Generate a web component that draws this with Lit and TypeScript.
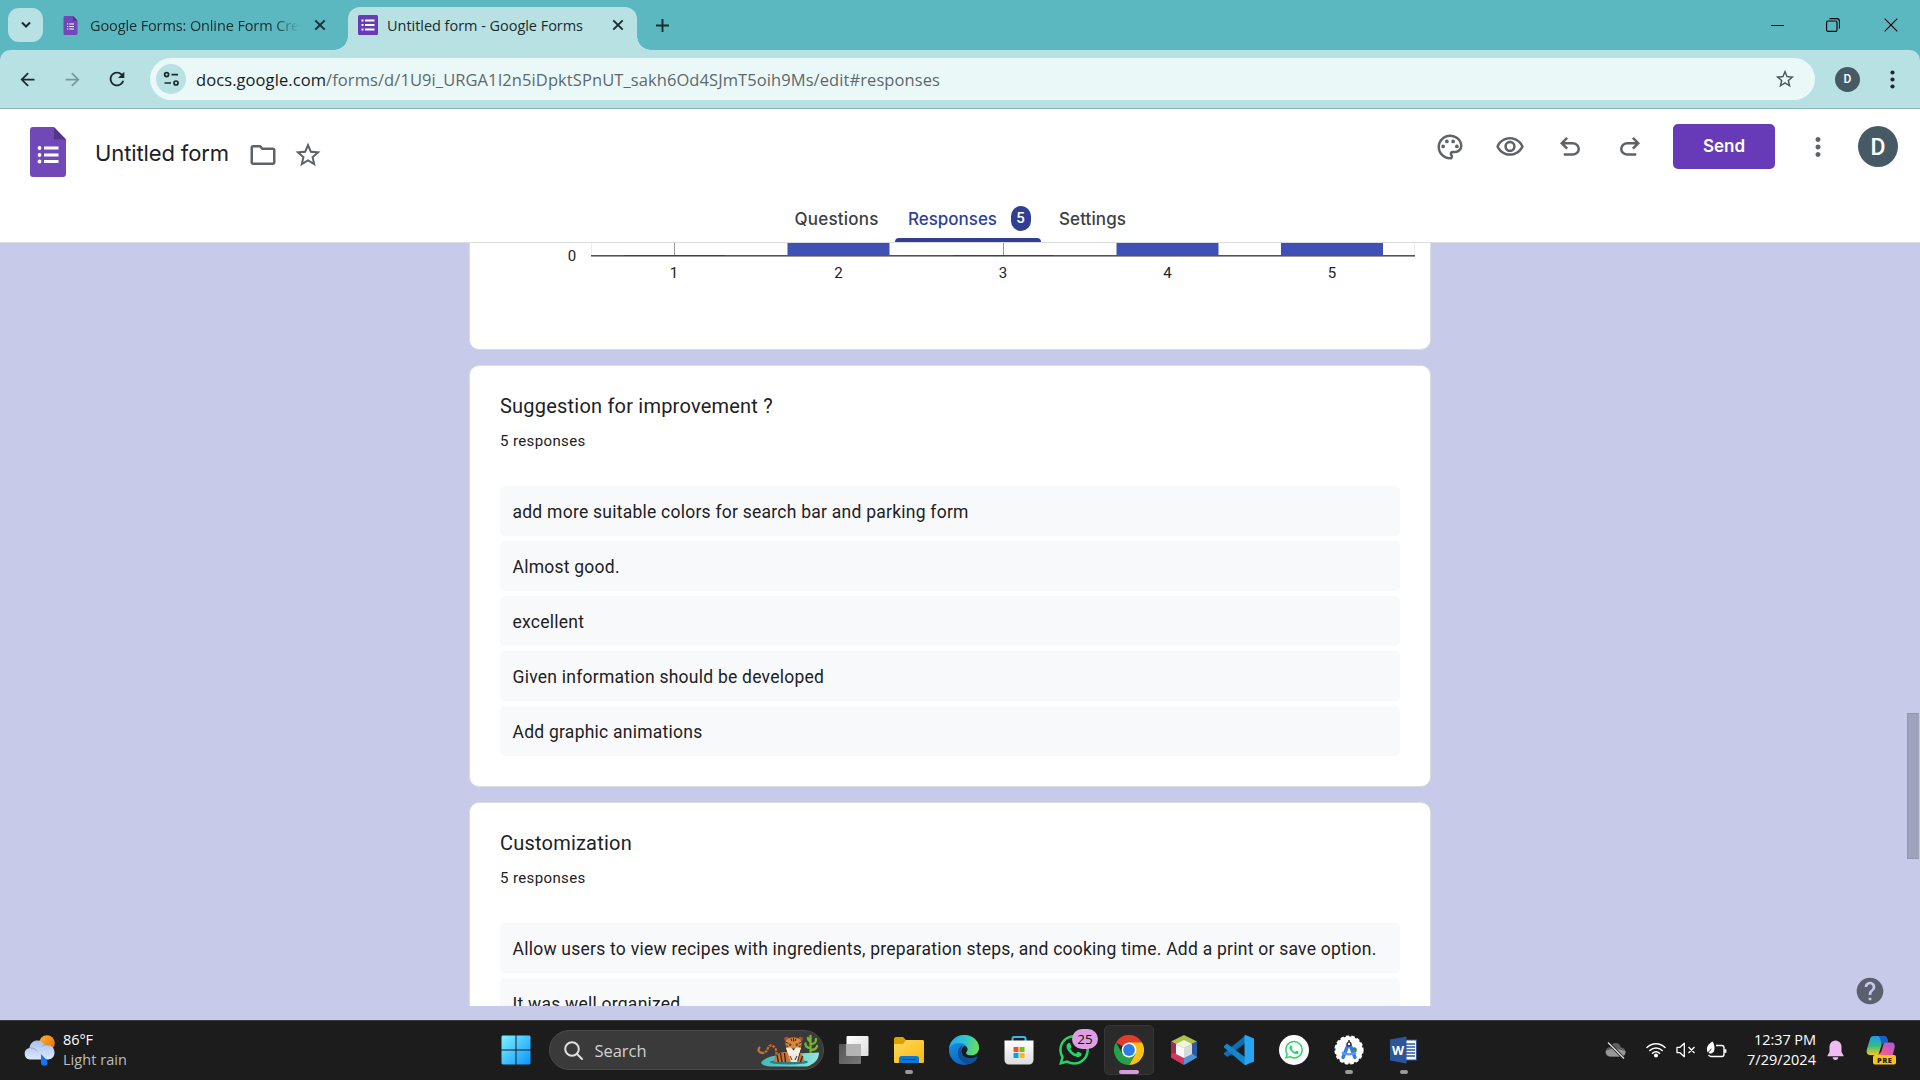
import { LitElement, html, svg, css } from "lit";
import { customElement, property } from "lit/decorators.js";

const ICON = {
  palette: "M12 22C6.49 22 2 17.51 2 12S6.49 2 12 2s10 4.04 10 9c0 3.31-2.69 6-6 6h-1.77c-.28 0-.5.22-.5.5 0 .12.05.23.13.33.41.47.64 1.06.64 1.67A2.5 2.5 0 0 1 12 22zm0-18c-4.41 0-8 3.59-8 8s3.59 8 8 8c.28 0 .5-.22.5-.5a.54.54 0 0 0-.14-.35c-.41-.46-.63-1.05-.63-1.65a2.5 2.5 0 0 1 2.5-2.5H16c2.21 0 4-1.79 4-4 0-3.86-3.59-7-8-7zM5 11.5a1.5 1.5 0 1 0 3 0a1.5 1.5 0 1 0-3 0zM8 7.5a1.5 1.5 0 1 0 3 0a1.5 1.5 0 1 0-3 0zM13 7.5a1.5 1.5 0 1 0 3 0a1.5 1.5 0 1 0-3 0zM16 11.5a1.5 1.5 0 1 0 3 0a1.5 1.5 0 1 0-3 0z",
  eye: "M12 6c3.79 0 7.17 2.13 8.82 5.5C19.17 14.87 15.79 17 12 17s-7.17-2.13-8.82-5.5C4.83 8.13 8.21 6 12 6m0-2C7 4 2.73 7.11 1 11.5 2.73 15.89 7 19 12 19s9.27-3.11 11-7.5C21.27 7.11 17 4 12 4zm0 5a2.5 2.5 0 0 1 0 5 2.5 2.5 0 0 1 0-5m0-2c-2.48 0-4.5 2.02-4.5 4.5S9.52 16 12 16s4.5-2.02 4.5-4.5S14.48 7 12 7z",
  undo: "M7 19v-2h7.1q1.575 0 2.738-1T18 13.5 16.838 11 14.1 10H7.8l2.6 2.6L9 14 4 9l5-5 1.4 1.4L7.8 8h6.3q2.425 0 4.163 1.575T20 13.5t-1.737 3.925T14.1 19z",
  redo: "M17 19v-2H9.9q-1.575 0-2.738-1T6 13.5 7.162 11 9.9 10h6.3l-2.6 2.6L15 14l5-5-5-5-1.4 1.4L16.2 8H9.9Q7.475 8 5.737 9.575T4 13.5t1.737 3.925T9.9 19z",
  folder: "M9.17 6l2 2H20v10H4V6h5.17M10 4H4c-1.1 0-1.99.9-1.99 2L2 18c0 1.1.9 2 2 2h16c1.1 0 2-.9 2-2V8c0-1.1-.9-2-2-2h-8l-2-2z",
  star: "M22 9.24l-7.19-.62L12 2 9.19 8.63 2 9.24l5.46 4.73L5.82 21 12 17.27 18.18 21l-1.63-7.03L22 9.24zM12 15.4l-3.76 2.27 1-4.28-3.32-2.88 4.38-.38L12 6.1l1.71 4.04 4.38.38-3.32 2.88 1 4.28L12 15.4z",
  more: "M12 8c1.1 0 2-.9 2-2s-.9-2-2-2-2 .9-2 2 .9 2 2 2zm0 2c-1.1 0-2 .9-2 2s.9 2 2 2 2-.9 2-2-.9-2-2-2zm0 6c-1.1 0-2 .9-2 2s.9 2 2 2 2-.9 2-2-.9-2-2-2z",
  help: "M12 2C6.48 2 2 6.48 2 12s4.48 10 10 10 10-4.48 10-10S17.52 2 12 2zm1 17h-2v-2h2v2zm2.07-7.75l-.9.92C13.45 12.9 13 13.5 13 15h-2v-.5c0-1.1.45-2.1 1.17-2.83l1.24-1.26c.37-.36.59-.86.59-1.41 0-1.1-.9-2-2-2s-2 .9-2 2H8c0-2.21 1.79-4 4-4s4 1.79 4 4c0 .88-.36 1.68-.93 2.25z",
  reload: "M17.65 6.35A7.958 7.958 0 0 0 12 4c-4.42 0-7.99 3.58-7.99 8s3.57 8 7.99 8c3.73 0 6.84-2.55 7.73-6h-2.08A5.99 5.99 0 0 1 12 18c-3.31 0-6-2.69-6-6s2.69-6 6-6c1.66 0 3.14.69 4.22 1.78L13 11h7V4l-2.35 2.35z",
  back: "M20 11H7.83l5.59-5.59L12 4l-8 8 8 8 1.41-1.41L7.83 13H20v-2z",
  forward: "M4 11h12.17l-5.59-5.59L12 4l8 8-8 8-1.41-1.41L16.17 13H4v-2z",
  whatsapp: "M17.472 14.382c-.297-.149-1.758-.867-2.03-.967-.273-.099-.471-.148-.67.15-.197.297-.767.966-.94 1.164-.173.199-.347.223-.644.075-.297-.15-1.255-.463-2.39-1.475-.883-.788-1.48-1.761-1.653-2.059-.173-.297-.018-.458.13-.606.134-.133.298-.347.446-.52.149-.174.198-.298.298-.497.099-.198.05-.371-.025-.52-.075-.149-.669-1.612-.916-2.207-.242-.579-.487-.5-.669-.51-.173-.008-.371-.01-.57-.01-.198 0-.52.074-.792.372-.272.297-1.04 1.016-1.04 2.479 0 1.462 1.065 2.875 1.213 3.074.149.198 2.096 3.2 5.077 4.487.709.306 1.262.489 1.694.625.712.227 1.36.195 1.871.118.571-.085 1.758-.719 2.006-1.413.248-.694.248-1.289.173-1.413-.074-.124-.272-.198-.57-.347m-5.421 7.403h-.004a9.87 9.87 0 01-5.031-1.378l-.361-.214-3.741.982.998-3.648-.235-.374a9.86 9.86 0 01-1.51-5.26c.001-5.45 4.436-9.884 9.888-9.884 2.64 0 5.122 1.03 6.988 2.898a9.825 9.825 0 012.893 6.994c-.003 5.45-4.437 9.884-9.885 9.884m8.413-18.297A11.815 11.815 0 0012.05 0C5.495 0 .16 5.335.157 11.892c0 2.096.547 4.142 1.588 5.945L.057 24l6.305-1.654a11.882 11.882 0 005.683 1.448h.005c6.554 0 11.89-5.335 11.893-11.893a11.821 11.821 0 00-3.48-8.413Z",
};

const icon = (path: string, size: number) =>
  html`<svg width=${size} height=${size} viewBox="0 0 24 24" fill="currentColor"><path d=${path}></path></svg>`;

const closeIcon = html`<svg width="12" height="12" viewBox="0 0 12 12" fill="none" stroke="#1c2b2d" stroke-width="1.9"><path d="M1.3 1.3l9.4 9.4M10.7 1.3l-9.4 9.4"></path></svg>`;

/* Single-line label whose tracking is adjusted so the text takes exactly `width` pixels. */
@customElement("fit-label")
class FitLabel extends LitElement {
  @property({ type: Number }) width = 0;
  static styles = css`
    :host { display: inline-block; white-space: nowrap; flex: none; }
    .text { display: inline-block; }
  `;
  firstUpdated() {
    const el = this.renderRoot.querySelector(".text") as HTMLElement;
    const count = (this.textContent ?? "").trim().length;
    const natural = el.getBoundingClientRect().width;
    if (count > 0 && natural > 0) el.style.letterSpacing = `${(this.width - natural) / count}px`;
  }
  render() {
    return html`<span class="text"><slot></slot></span>`;
  }
}

@customElement("browser-chrome")
class BrowserChrome extends LitElement {
  static styles = css`
    :host { display: block; font-family: "Open Sans", "Noto Sans", sans-serif; color: #1b2a2c; background: #5bb8c1; }
    .strip { height: 50px; display: flex; align-items: center; padding-left: 8px; box-sizing: border-box; }
    .search { width: 35px; height: 34px; border-radius: 11px; background: #b8e1e4; display: flex; align-items: center; justify-content: center; }
    .tab { display: flex; align-items: center; font-size: 14.5px; letter-spacing: 0; }
    .idle { width: 305px; padding-left: 20px; box-sizing: border-box; }
    .idle .title { margin-left: 12px; width: 209px; -webkit-mask-image: linear-gradient(90deg, #000 88%, transparent 100%); mask-image: linear-gradient(90deg, #000 88%, transparent 100%); }
    .idle .x { margin-left: 15px; }
    svg { display: block; flex: none; }
    .active { align-self: flex-end; position: relative; height: 43px; width: 289px; background: #b8e1e4; border-radius: 12px 12px 0 0; padding: 0 0 7px 10px; box-sizing: border-box; }
    .active::before, .active::after { content: ""; position: absolute; bottom: 0; width: 14px; height: 14px; }
    .active::before { left: -14px; background: radial-gradient(circle at 0 0, transparent 13.5px, #b8e1e4 14px); }
    .active::after { right: -14px; background: radial-gradient(circle at 100% 0, transparent 13.5px, #b8e1e4 14px); }
    .active .title { margin-left: 9px; }
    .active .x { margin-left: 29px; }
    .plus { margin-left: 19px; }
    .window { margin-left: auto; display: flex; align-items: center; padding-right: 22px; }
    .window .mid { margin: 0 44px 0 42px; }
    .bar { height: 58px; background: #b8e1e4; border-radius: 10px 10px 0 0; display: flex; align-items: center; padding-left: 17px; border-bottom: 1px solid #8fb5b9; }
    .fwd { margin-left: 24px; color: #7a999c; }
    .rel { margin-left: 23px; }
    .omni { margin-left: 22px; width: 1665px; height: 42px; border-radius: 21px; background: #ebf8f8; display: flex; align-items: center; padding-left: 6px; box-sizing: border-box; }
    .tune { width: 30px; height: 30px; border-radius: 50%; background: #b8e1e4; display: flex; align-items: center; justify-content: center; }
    .url { margin-left: 10px; font-size: 16.5px; line-height: 24px; color: #5d696b; padding-top: 1px; }
    .host { color: #182022; }
    .fav { margin-left: auto; margin-right: 19px; color: #4b5759; }
    .me { margin-left: 20px; width: 25px; height: 25px; border-radius: 50%; background: #455a64; color: #fff; font: 500 12px/25px Roboto, sans-serif; text-align: center; }
    .dots { margin-left: 22px; }
  `;
  render() {
    return html`
      <div class="strip">
        <div class="search"><svg width="10" height="8" viewBox="0 0 10 8" fill="none" stroke="#1b2a2c" stroke-width="2"><path d="M1 1.5l4 4 4-4"></path></svg></div>
        <div class="tab idle">
          <svg width="15" height="19" viewBox="0 0 15 19"><path d="M1.5 0H10l4.500 4.500V17.500a1.400 1.400 0 0 1-1.400 1.400H1.500A1.400 1.400 0 0 1 .5 17.500V1.400A1.400 1.400 0 0 1 1.500 0z" fill="#7248b9"></path><path d="M10 0l4.500 4.500H10z" fill="#54308f"></path><path d="M4 8h1.200M6.300 8H11M4 10.500h1.200M6.300 10.500H11M4 13h1.200M6.300 13H11" stroke="#fff" stroke-width="1.200"></path></svg>
          <div class="title"><fit-label width="209">Google Forms: Online Form Cre</fit-label></div>
          <span class="x">${closeIcon}</span>
        </div>
        <div class="tab active">
          <svg width="20" height="20" viewBox="0 0 20 20"><rect width="20" height="20" rx="1.500" fill="#673ab7"></rect><path d="M3.500 5.500h2M7 5.500h9.500M3.500 10h2M7 10h9.500M3.500 14.500h2M7 14.500h9.500" stroke="#fff" stroke-width="2"></path></svg>
          <fit-label class="title" width="196">Untitled form - Google Forms</fit-label>
          <span class="x">${closeIcon}</span>
        </div>
        <svg class="plus" width="13" height="13" viewBox="0 0 13 13" stroke="#1b2a2c" stroke-width="1.900"><path d="M6.500 0v13M0 6.500h13"></path></svg>
        <div class="window">
          <svg width="13" height="13" viewBox="0 0 13 13" stroke="#000" stroke-width="1"><path d="M0 6.500h13"></path></svg>
          <svg class="mid" width="14" height="14" viewBox="0 0 14 14" fill="none" stroke="#000" stroke-width="1.100"><rect x=".6" y="3" width="10.400" height="10.400" rx="1.500"></rect><path d="M3.500 .6h7.200a2.700 2.700 0 0 1 2.700 2.700v7.200"></path></svg>
          <svg width="14" height="14" viewBox="0 0 14 14" stroke="#000" stroke-width="1.100"><path d="M.7 .7l12.600 12.600M13.300 .7L.7 13.300"></path></svg>
        </div>
      </div>
      <div class="bar">
        ${icon(ICON.back, 21)}
        <span class="fwd">${icon(ICON.forward, 21)}</span>
        <span class="rel">${icon(ICON.reload, 22)}</span>
        <div class="omni">
          <div class="tune"><svg width="17" height="16" viewBox="0 0 17 16" fill="none" stroke="#1b2a2c" stroke-width="1.700"><circle cx="3.600" cy="3.600" r="2"></circle><path d="M8.500 3.600H15M1.500 12h6.500"></path><circle cx="13" cy="12" r="2"></circle></svg></div>
          <fit-label class="url" width="744"><span class="host">docs.google.com</span>/forms/d/1U9i_URGA1I2n5iDpktSPnUT_sakh6Od4SJmT5oih9Ms/edit#responses</fit-label>
          <span class="fav">${icon(ICON.star, 22)}</span>
        </div>
        <div class="me">D</div>
        <svg class="dots" width="21" height="21" viewBox="0 0 21 21" fill="#1b2a2c"><circle cx="10.500" cy="3.500" r="2.100"></circle><circle cx="10.500" cy="10.500" r="2.100"></circle><circle cx="10.500" cy="17.500" r="2.100"></circle></svg>
      </div>`;
  }
}

@customElement("form-header")
class FormHeader extends LitElement {
  static styles = css`
    :host { display: block; background: #fff; border-bottom: 1px solid #dadce0; font-family: Inter, "Open Sans", sans-serif; color: #202124; }
    svg { display: block; flex: none; }
    .top { height: 86px; display: flex; align-items: flex-start; justify-content: space-between; box-sizing: border-box; padding: 15px 22px 0 29px; }
    .left { display: flex; align-items: center; height: 50px; margin-top: 3px; color: #5f6368; }
    .name { margin: 0 19px 0 28px; font-size: 22px; color: #202124; line-height: 30px; padding-top: 2px; }
    .left .star { margin-left: 15px; padding-top: 5px; }
    .left .folder { padding-top: 5px; }
    .right { display: flex; align-items: center; height: 45px; color: #5f6368; }
    .right > svg { margin-right: 30px; }
    .send { width: 102px; height: 45px; border-radius: 5px; background: #673ab7; color: #fff; font-weight: 600; font-size: 17px; display: flex; align-items: center; justify-content: center; margin: 0 28px 0 -2px; }
    .send fit-label { margin-top: -1px; }
    .avatar { width: 40px; height: 41px; border-radius: 50%; background: #455a64; color: #fff; font: 500 23px/43px Roboto, sans-serif; text-align: center; }
    .right > svg.more { margin-right: 25px; }
    .tabs { height: 47px; display: flex; justify-content: center; font-size: 17px; font-weight: 450; color: #3c4043; }
    .tab { display: flex; align-items: center; box-sizing: border-box; }
    .q { width: 115px; padding-left: 14.5px; }
    .r { width: 146px; padding-left: 13px; color: #303f9f; padding-top: 0; position: relative; }
    .r::after { content: ""; position: absolute; left: 0; right: 0; bottom: 0; height: 4px; border-radius: 4px 4px 0 0; background: #303f91; }
    .s { width: 99px; padding-left: 18px; }
    .count { margin-left: 13.5px; width: 20px; height: 25px; border-radius: 10px; background: #303f91; color: #fff; font: 500 15px/25px Roboto, sans-serif; text-align: center; }
  `;
  render() {
    return html`
      <div class="top">
        <div class="left">
          <svg width="38" height="50" viewBox="0 0 38 50"><path d="M4 0h20.500L37 12.500V47a3 3 0 0 1-3 3H4a3 3 0 0 1-3-3V3a3 3 0 0 1 3-3z" fill="#7248b9"></path><path d="M25 0l12 12.500H25z" fill="#54358a"></path><g fill="#fff"><circle cx="10.500" cy="21" r="1.900"></circle><circle cx="10.500" cy="28" r="1.900"></circle><circle cx="10.500" cy="34.500" r="1.900"></circle><path d="M15 19.500h14.500v3H15zM15 26.400h14.500v3H15zM15 33h14.500v3H15z"></path></g></svg>
          <fit-label class="name" width="134">Untitled form</fit-label>
          <span class="folder">${icon(ICON.folder, 30)}</span>
          <span class="star">${icon(ICON.star, 30)}</span>
        </div>
        <div class="right">
          ${icon(ICON.palette, 30)}${icon(ICON.eye, 30)}${icon(ICON.undo, 30)}${icon(ICON.redo, 30)}
          <div class="send"><fit-label width="42">Send</fit-label></div>
          <svg class="more" width="30" height="30" viewBox="0 0 24 24" fill="currentColor"><path d=${ICON.more}></path></svg>
          <div class="avatar">D</div>
        </div>
      </div>
      <div class="tabs">
        <div class="tab q"><fit-label width="84">Questions</fit-label></div>
        <div class="tab r"><fit-label width="89">Responses</fit-label><span class="count">5</span></div>
        <div class="tab s"><fit-label width="67">Settings</fit-label></div>
      </div>`;
  }
}

interface Question { title: string; answers: string[]; }

const QUESTIONS: Question[] = [
  { title: "Suggestion for improvement ?", answers: ["add more suitable colors for search bar and parking form", "Almost good.", "excellent", "Given information should be developed", "Add graphic animations"] },
  { title: "Customization", answers: ["Allow users to view recipes with ingredients, preparation steps, and cooking time. Add a print or save option.", "It was well organized"] },
];

@customElement("form-responses")
class FormResponses extends LitElement {
  static styles = css`
    :host { display: grid; grid-template-columns: 1900px 20px; height: 777px; background: #c7cae9; font-family: Roboto, sans-serif; color: #202124; }
    .feed { height: 763px; overflow: hidden; display: flex; flex-direction: column; align-items: center; gap: 15px; }
    .card { flex: none; width: 962px; box-sizing: border-box; background: #fff; border: 1px solid #dadce0; border-radius: 10px; padding: 25px 30px 30px; }
    .chart { height: 107px; border-top: 0; border-radius: 0 0 10px 10px; padding: 0; }
    .chart svg { display: block; }
    .axis { font: 15px Roboto, sans-serif; fill: #222; }
    .title { font-size: 20px; line-height: 30px; letter-spacing: 0.21px; }
    .total { font-size: 15px; line-height: 25px; letter-spacing: 0.375px; margin: 8px 0 32px; }
    .list { display: flex; flex-direction: column; gap: 5px; }
    .answer { height: 50px; line-height: 52px; border-radius: 5px; background: #f8f9fa; padding-left: 12.5px; font-size: 17.5px; letter-spacing: 0.243px; white-space: nowrap; }
    .rail { display: flex; flex-direction: column; padding: 470px 1px 0 7px; }
    .thumb { height: 146px; background: #9ea2bc; border: 1px solid #9195b1; border-right: 0; box-sizing: border-box; }
    .help { position: absolute; left: 1854px; top: 975px; color: #5c5f70; }
  `;
  render() {
    const cols = [674, 838.5, 1003, 1167.5, 1332];
    const bars = [1, 3, 4];
    return html`
      <div class="feed">
        <div class="card chart">
          <svg width="960" height="60" viewBox="470 243 960 60">
            <path d="M591.5 243v12M1414.500 243v12" stroke="#ebebeb"></path>
            <path d="M674.500 243v12M1003.500 243v12" stroke="#999"></path>
            ${bars.map((i) => svg`<rect x=${cols[i] - 51} y="243" width="102" height="12" fill="#3f51b5"></rect>`)}
            <path d="M591 255.500h824" stroke="#555" stroke-width="1"></path>
            <path d="M591 256.500h824" stroke="#999" stroke-width="1"></path>
            <path d="M624 255.500h101M953 255.500h101" stroke="#3c3f5c" stroke-width="1"></path>
            <text class="axis" x="572" y="261" text-anchor="middle">0</text>
            ${cols.map((x, i) => svg`<text class="axis" x=${x} y="278" text-anchor="middle">${i + 1}</text>`)}
          </svg>
        </div>
        ${QUESTIONS.map((q) => html`
          <div class="card">
            <div class="title">${q.title}</div>
            <div class="total">5 responses</div>
            <div class="list">${q.answers.map((a) => html`<div class="answer">${a}</div>`)}</div>
          </div>`)}
      </div>
      <div class="rail"><div class="thumb"></div></div>
      <div class="help">${icon(ICON.help, 32)}</div>`;
  }
}

const tiger = html`<svg width="64" height="40" viewBox="0 0 64 40">
  <defs><linearGradient id="pool" x1="0" x2="1"><stop offset="0" stop-color="#3fb8ba"></stop><stop offset="1" stop-color="#8fe6dc"></stop></linearGradient></defs>
  <path d="M4 33c2-5 12-8 26-9l32-1.500c0 8-6 12-12 14H17C9 36.500 5 35 4 33z" fill="url(#pool)"></path>
  <ellipse cx="32" cy="32" rx="19" ry="2.600" fill="#247f8b"></ellipse>
  <path d="M20 29c-2-4 1-8-2-11-3-4-6-3-7 0-1 3-2 5-5 5-4 0-6-3-3-6" fill="none" stroke="#c96f33" stroke-width="2.300"></path>
  <path d="M20 29c-2-4 1-8-2-11-3-4-6-3-7 0-1 3-2 5-5 5" fill="none" stroke="#3a2418" stroke-width="2.300" stroke-dasharray=".9 2.800"></path>
  <path d="M17 32c0-6 4-10 11-10h13c5 1 6 6 6 10z" fill="#d0742f"></path>
  <path d="M20 25l1.500 7M23.500 23l1.500 9M27.500 23l1 9M42.500 23l-2 8M45.500 26l-2 6" stroke="#33202a" stroke-width="1.300"></path>
  <path d="M30 21h13l-3 11h-6z" fill="#f0e2d4"></path>
  <path d="M33 26l2 4M40 26l-2 4" stroke="#43302e" stroke-width="1"></path>
  <circle cx="29.500" cy="9" r="2.300" fill="#a8542a"></circle><circle cx="43.500" cy="9" r="2.300" fill="#a8542a"></circle>
  <path d="M28.500 13c0-4 4-5.500 8-5.500s8 1.500 8 5.500c0 5-2 10-8 11-6-1-8-6-8-11z" fill="#dc8440"></path>
  <path d="M29 18c2 0 4-1 5 0l2.500 1 2.500-1c1-1 3 0 5 0-1 4-3 7-7.500 7S30 22 29 18z" fill="#f7efe6"></path>
  <path d="M36.500 8v3.500M34 8.500l.8 2.500M39 8.500l-.8 2.500M29 12.500l2.300 .8M44 12.500l-2.300 .8M29.300 16l2 .3M43.700 16l-2 .3" stroke="#3a2418" stroke-width="1"></path>
  <path d="M34.800 18.500h3.400l-1.700 2z" fill="#3a2418"></path>
  <circle cx="33.200" cy="14.800" r="1.200" fill="#2c5a48"></circle><circle cx="39.800" cy="14.800" r="1.200" fill="#2c5a48"></circle>
  <path d="M53.500 22V6M53.500 18c-3.500 0-5-1.500-5-4.500M53.500 14c4 0 5.500-1 5.500-5M53.500 11c-2 0-2.500-1.500-2.500-3M53.500 20c4 0 6-1 6.500-4" fill="none" stroke="#74b82d" stroke-width="2.300" stroke-linecap="round"></path>
</svg>`;

interface App { art: unknown; mark?: "dot" | "on"; badge?: string; }

const APPS: App[] = [
  { art: html`<svg width="30" height="30" viewBox="0 0 30 30"><defs><linearGradient id="tv1" x2="1" y2="1"><stop offset="0" stop-color="#555"></stop><stop offset="1" stop-color="#777"></stop></linearGradient><linearGradient id="tv2" x2="1" y2="1"><stop offset="0" stop-color="#fff"></stop><stop offset="1" stop-color="#ddd"></stop></linearGradient></defs><rect x="0" y="9" width="22" height="20" rx="1" fill="url(#tv1)"></rect><rect x="7.500" y="1" width="22" height="20" rx="1" fill="url(#tv2)"></rect><path d="M7.500 9H22v12H7.500z" fill="#b4b4b4"></path></svg>` },
  { mark: "dot", art: html`<svg width="30" height="30" viewBox="0 0 30 30"><defs><linearGradient id="fd" x2="1" y2="1"><stop offset="0" stop-color="#ffd95a"></stop><stop offset="1" stop-color="#f9b80f"></stop></linearGradient></defs><path d="M0 4a2 2 0 0 1 2-2h7l3 3h16a2 2 0 0 1 2 2v10H0z" fill="#dfa000"></path><path d="M0 9h9l3-4h16.500A1.500 1.500 0 0 1 30 6.500V26.500A1.500 1.500 0 0 1 28.500 28h-27A1.500 1.500 0 0 1 0 26.500z" fill="url(#fd)"></path><path d="M5 28v-4.500A2.500 2.500 0 0 1 7.500 21h15a2.500 2.500 0 0 1 2.500 2.500V28z" fill="#0f78d4"></path><path d="M9 24.500h12" stroke="#074d99" stroke-width="1.200" stroke-linecap="round"></path></svg>` },
  { art: html`<svg width="30" height="30" viewBox="0 0 30 30"><defs><linearGradient id="e1" x1="0" y1=".3" x2="1" y2=".5"><stop offset="0" stop-color="#25a7ee"></stop><stop offset=".5" stop-color="#2fc4d0"></stop><stop offset="1" stop-color="#6ee04f"></stop></linearGradient><linearGradient id="e2" x1="0" y1="0" x2=".6" y2="1"><stop offset="0" stop-color="#1a9bea"></stop><stop offset="1" stop-color="#0a5fbe"></stop></linearGradient></defs><circle cx="15" cy="15" r="15" fill="url(#e2)"></circle><path d="M0 14C1 5 8 0 15 0c9 0 15 6 15 12.500 0 5-4 8-8 8-3 0-5-1-5-2.500 0-1 1.500-1.500 1.500-4C18.500 11 15 8 10.500 8 5 8 1 11 0 14z" fill="url(#e1)"></path><path d="M14 10c-3 1-5 4-5 8 0 6 5 11 11 11 4-1 7-4 8-6-8 3-16-1-16-8 0-2 1-4 2-5z" fill="#124f94"></path><path d="M15 11c-3 2-4 8 1 11 4 2.500 9 1.500 12-.5l1 1.500h1V15c-1 4-4 5.500-8 5.500-3 0-5-1-5-2.500 0-1 1.500-1.500 1.500-4 0-1.500-1.500-3-3.500-3z" fill="#1c1c1c"></path><path d="M28 21.500C26 23 20 24 16.500 22L20 29c4-.5 7.500-4 8.500-6.500z" fill="#124f94"></path></svg>` },
  { art: html`<svg width="30" height="30" viewBox="0 0 30 30"><defs><linearGradient id="st" x2="0" y2="1"><stop offset="0" stop-color="#fff"></stop><stop offset="1" stop-color="#dcdcdc"></stop></linearGradient></defs><path d="M8.500 6V3.500A1.500 1.500 0 0 1 10 2h10a1.500 1.500 0 0 1 1.500 1.500V6" fill="none" stroke="#35b6ee" stroke-width="2"></path><path d="M.5 5.500h29V25a4.500 4.500 0 0 1-4.500 4.500H5A4.500 4.500 0 0 1 .5 25z" fill="url(#st)"></path><path d="M9.500 12h5v5h-5z" fill="#f25022"></path><path d="M15.500 12h5v5h-5z" fill="#7fba00"></path><path d="M9.500 18h5v5h-5z" fill="#00a4ef"></path><path d="M15.500 18h5v5h-5z" fill="#ffb900"></path></svg>` },
  { badge: "25", art: html`<svg width="30" height="30" viewBox="0 0 24 24" fill="#25d366"><path d=${ICON.whatsapp}></path></svg>` },
  { mark: "on", art: html`<svg width="30" height="30" viewBox="0 0 30 30"><path d="M15 15L2 7.500A15 15 0 0 1 28 7.500z" fill="#e33b2e"></path><path d="M15 7.500H28A15 15 0 0 1 15 30l6.500-11.200z" fill="#fbc116"></path><path d="M2 7.500A15 15 0 0 0 15 30l6.500-11.300L15 15 8.500 18.700z" fill="#24a149"></path><circle cx="15" cy="15" r="7.400" fill="#fff"></circle><circle cx="15" cy="15" r="5.900" fill="#2b7de9"></circle></svg>` },
  { art: html`<svg width="30" height="30" viewBox="0 0 30 30"><path d="M15 0l13 6.500-13 7-13-7z" fill="#adc04a"></path><path d="M2 6.500l13 7V30L2 22.500z" fill="#a9284f"></path><path d="M28 6.500l-13 7V30l13-7.500z" fill="#4d93dc"></path><path d="M2 19l13-4v15L2 22.500z" fill="#d3375e"></path><path d="M28 6.500L22 9v9l6 4z" fill="#2e5a9c"></path><path d="M15 5l8 4-8 4-8-4z" fill="#f0f3df"></path><path d="M7 9l8 4v10l-8-4z" fill="#fafafa"></path><path d="M23 9l-8 4v10l8-4z" fill="#d5d8dc"></path></svg>` },
  { art: html`<svg width="30" height="30" viewBox="0 0 30 30"><path d="M22 0l-1 8L3.500 22 0 19.500v-1.500z" fill="#0b6fb5"></path><path d="M0 11l3-2.500L22 23v7l-2-.5L0 12.500z" fill="#1585cf"></path><path d="M21.500 0L30 3.500v23L21.500 30c-.8 0-1-.5-1-1V1c0-.6.300-1 1-1z" fill="#27a5f2"></path></svg>` },
  { art: html`<svg width="30" height="30" viewBox="0 0 30 30"><circle cx="15" cy="15" r="15" fill="#fff"></circle><g transform="translate(6 5.800) scale(.75)"><path d=${ICON.whatsapp} fill="#25d366"></path></g></svg>` },
  { mark: "dot", art: html`<svg width="30" height="30" viewBox="0 0 30 30"><circle cx="15" cy="15" r="13.600" fill="#fff"></circle><circle cx="15" cy="15" r="13.600" fill="none" stroke="#fff" stroke-width="2" stroke-dasharray="3.500 2"></circle><circle cx="20" cy="15" r="2.800" fill="#2f8f4e"></circle><path d="M14 10L9 22.500M16 10l5 12.500" stroke="#3b78e7" stroke-width="3.400" stroke-linecap="round"></path><path d="M8 17.500c4.500 2.500 9.500 2.500 14 0" stroke="#5a9bf5" stroke-width="2.200" fill="none"></path><circle cx="15" cy="9" r="1.900" fill="#fff" stroke="#333" stroke-width="1.400"></circle><path d="M15 5v2.500" stroke="#333" stroke-width="1.500"></path></svg>` },
  { mark: "dot", art: html`<svg width="28" height="30" viewBox="0 0 28 30"><path d="M14 5h12.500v20H14z" fill="#fff" stroke="#2b579a" stroke-width="1.200"></path><path d="M16 9h9M16 12h9M16 15h9M16 18h9M16 21h9" stroke="#2b579a" stroke-width="1.300"></path><path d="M0 4.500L16.500 1.500v27L0 25.500z" fill="#2b579a"></path><text class="w" x="8" y="19.500" text-anchor="middle">W</text></svg>` },
];

@customElement("task-bar")
class TaskBar extends LitElement {
  static styles = css`
    :host { display: flex; height: 60px; box-sizing: border-box; border-top: 1px solid #3a3a3a; background: #1c1c1c; color: #fff; font-family: "Open Sans", "Noto Sans", sans-serif; align-items: center; padding-bottom: 1px; }
    svg { display: block; flex: none; }
    .weather { width: 488.5px; box-sizing: border-box; padding-left: 24px; display: flex; align-items: center; gap: 8px; font-size: 14.5px; line-height: 20px; }
    .weather .sub { color: #bdbdbd; }
    .lines { display: flex; flex-direction: column; }
    .slot { position: relative; width: 55px; height: 50px; display: flex; align-items: center; justify-content: center; }
    .find { margin: 0 2.5px 0 5px; width: 275px; height: 40px; box-sizing: border-box; border: 1px solid #4a4a4a; border-radius: 20px; background: #3a3a3a; display: flex; align-items: center; padding-left: 14px; color: #d2d2d2; font-size: 16.5px; }
    .find fit-label { margin-left: 12px; }
    .find .pic { margin-left: auto; margin-right: 2px; }
    .on::before { content: ""; position: absolute; inset: 0 2.5px; border-radius: 5px; background: #2b2b2b; border: 1px solid #363636; box-sizing: border-box; }
    .slot svg { position: relative; }
    .dot::after, .on::after { content: ""; position: absolute; bottom: 1px; height: 4px; border-radius: 2px; width: 8px; background: #9a9a9a; }
    .on::after { width: 20px; background: #d99be0; }
    .badge { position: absolute; left: 26px; top: 4px; width: 26px; height: 20px; border-radius: 10px; background: #dc9fe4; color: #111; font-size: 13.5px; line-height: 20px; text-align: center; }
    .w { font: 700 12.5px "Open Sans", sans-serif; fill: #fff; }
    .tray { margin-left: auto; display: flex; align-items: center; padding-right: 24px; }
    .wifi { margin-left: 20px; }
    .mute, .power { margin-left: 10px; }
    .clock { width: 89px; display: flex; flex-direction: column; align-items: flex-end; font-size: 14.5px; line-height: 20px; }
    .bell { margin: 0 22px 0 11px; }
    .pre { font: 800 7.5px "Open Sans", sans-serif; letter-spacing: 0.5px; fill: #222; }
  `;
  render() {
    return html`
      <div class="weather">
        <svg width="31" height="31" viewBox="0 0 31 31"><defs><linearGradient id="sun" x2="1" y2="1"><stop offset="0" stop-color="#f7b62c"></stop><stop offset="1" stop-color="#f0640e"></stop></linearGradient><linearGradient id="cl" x2="0" y2="1"><stop offset="0" stop-color="#a9c0ee"></stop><stop offset="1" stop-color="#dce8fb"></stop></linearGradient></defs><circle cx="23" cy="8" r="7.800" fill="url(#sun)"></circle><path d="M6 24.500a5.800 5.800 0 0 1-.5-11.500C6 8 9.500 5.500 13.500 5.500c3.500 0 6 2 7 5 5-1.500 10 1.500 10 7 0 4-2.500 7-6.500 7z" fill="url(#cl)"></path><path d="M17.500 11.500c2-2 6-2 8 0M6 13c3 0 5 .5 7 3" fill="none" stroke="#8fa9e2" stroke-width="1"></path><path d="M17 19c3 3.500 6.500 5.500 6.500 8.500a3.250 3.250 0 0 1-6.500 0z" fill="#1673f3"></path></svg>
        <div class="lines"><fit-label width="30">86°F</fit-label><fit-label class="sub" width="64">Light rain</fit-label></div>
      </div>
      <div class="slot"><svg width="30" height="30" viewBox="0 0 30 30"><defs><linearGradient id="win" x2="1" y2="1"><stop offset="0" stop-color="#7df3ff"></stop><stop offset="1" stop-color="#0a94ff"></stop></linearGradient></defs><path d="M1.500 .5H14.500V14.500H.500V1.500zM15.500 .5H28.500l1 1V14.500h-14zM.5 15.500h14v14H1.500l-1-1zM15.500 15.500h14V28.500l-1 1h-13z" fill="url(#win)"></path></svg></div>
      <div class="find">
        <svg width="19" height="19" viewBox="0 0 19 19" fill="none" stroke="#e0e0e0" stroke-width="2" stroke-linecap="round"><circle cx="8" cy="8" r="6.800"></circle><path d="M13 13l5 5"></path></svg>
        <fit-label width="52">Search</fit-label>
        <span class="pic">${tiger}</span>
      </div>
      ${APPS.map((a) => html`<div class="slot ${a.mark ?? ""}">${a.art}${a.badge ? html`<span class="badge">${a.badge}</span>` : ""}</div>`)}
      <div class="tray">
        <svg width="21" height="17" viewBox="0 0 21 17"><path d="M5 14.500a4.600 4.600 0 0 1 0-9.200C6 2.500 8 1 10.500 1c3 0 5 2 5.500 4.500 2.500 0 4.500 2 4.500 4.500s-2 4.500-4.500 4.500z" fill="#5f5f5f"></path><path d="M5 14.500a4.600 4.600 0 0 1-4-5.500c5-3 12-2 19.300 0 .7 3-1.300 5.500-4.300 5.500z" fill="#989898"></path><path d="M3 .5L19 16.500" stroke="#1c1c1c" stroke-width="3"></path><path d="M3 .5L19 16.500" stroke="#e6e6e6" stroke-width="1.300"></path></svg>
        <svg class="wifi" width="20" height="16" viewBox="0 0 20 16" fill="none" stroke="#fff" stroke-width="1.500" stroke-linecap="round"><path d="M1 5.500c5-5 13-5 18 0M3.800 8.500c3.500-3.500 8.900-3.500 12.400 0M6.500 11.300c2-2 5-2 7 0"></path><circle cx="10" cy="13.500" r="1.300" fill="#fff"></circle></svg>
        <svg class="mute" width="20" height="16" viewBox="0 0 20 16" fill="none" stroke="#fff" stroke-width="1.300" stroke-linejoin="round"><path d="M1 5.300h3L8.300 1.300v13.400L4 10.700H1zM12.500 5l6 6M18.500 5l-6 6"></path></svg>
        <svg class="power" width="21" height="18" viewBox="0 0 21 18" fill="none" stroke="#fff" stroke-width="1.400"><path d="M10 4.500h5.800a2.200 2.200 0 0 1 2.200 2.200v6.600a2.200 2.200 0 0 1-2.200 2.200H5a3 3 0 0 1-2.500-1.500"></path><path d="M19.300 8.200v3.600" stroke-width="2.200"></path><path d="M6.500 .5C2 3 .5 6 1 9.500c.3 2 1.500 3 3 3 3.500 0 4.500-2.500 4.500-5.500 0-2.500-.8-5-2-6.500z" fill="#fff" stroke="none"></path><path d="M1 15c.5-3 2-5 4.500-7" stroke="#1c1c1c" stroke-width="1"></path></svg>
        <div class="clock"><fit-label width="62">12:37 PM</fit-label><fit-label width="69">7/29/2024</fit-label></div>
        <svg class="bell" width="17" height="20" viewBox="0 0 17 20" fill="#eebcf2"><path d="M8.500 .5A6 6 0 0 1 14.500 6.500V12l2 3.500v.8H.500v-.8L2.500 12V6.500A6 6 0 0 1 8.500 .5zM5.800 17.300h5.400a2.700 2.700 0 0 1-5.400 0z"></path></svg>
        <svg width="30" height="30" viewBox="0 0 30 30"><defs><linearGradient id="cp1" x2="0" y2="1"><stop offset="0" stop-color="#1b9df0"></stop><stop offset=".5" stop-color="#35b98a"></stop><stop offset="1" stop-color="#f3c91c"></stop></linearGradient><linearGradient id="cp2" x1="1" x2="0" y2="1"><stop offset="0" stop-color="#a45be8"></stop><stop offset=".6" stop-color="#e8589c"></stop><stop offset="1" stop-color="#f8834c"></stop></linearGradient></defs><path d="M18 7.500h7c3 0 4.500 2 3.500 5.500l-2 8H10l2-2c2 0 3-1.500 3.500-3z" fill="url(#cp2)"></path><path d="M7.500 1H17c3.500 0 4.500 2 5 6.500h-3c-2 0-3 1-3.500 3L13 18c-.6 1.700-1.500 2-3 2H4.500C1 20 0 17.500 1 14L4 4c.6-2 1.700-3 3.500-3z" fill="url(#cp1)"></path><path d="M12 1h5c3.500 0 4.500 2 5 6.500h-3c-2 0-3 1-3.500 3C15 6 14 2 12 1z" fill="#1c5fd0"></path><rect x="7" y="20" width="23" height="9.500" rx="2" fill="#fdc412"></rect><text class="pre" x="18.700" y="27.500" text-anchor="middle">PRE</text></svg>
      </div>`;
  }
}

@customElement("app-root")
class AppRoot extends LitElement {
  static styles = css`
    :host { display: flex; flex-direction: column; width: 1920px; height: 1080px; overflow: hidden; position: relative; background: #c7cae9; }
    form-responses { flex: 1; }
  `;
  render() {
    return html`<browser-chrome></browser-chrome><form-header></form-header><form-responses></form-responses><task-bar></task-bar>`;
  }
}
